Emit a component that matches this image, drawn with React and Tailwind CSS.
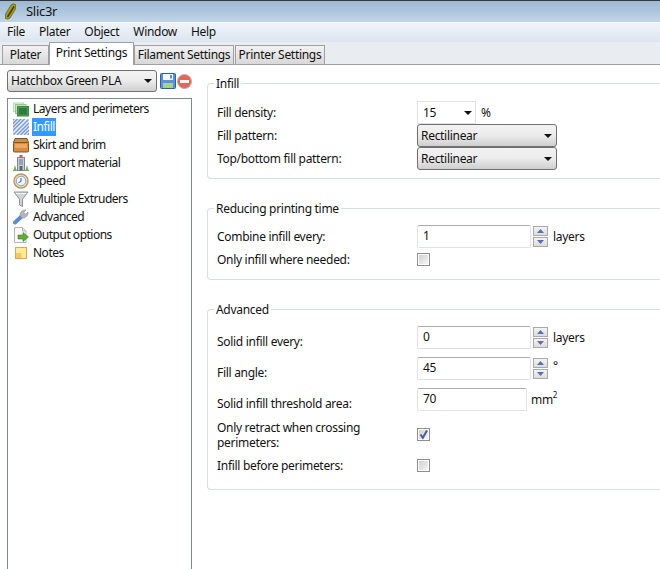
import React from "react";

const Caret = ({ className = "" }) => (
  <svg width="8" height="4" viewBox="0 0 8 4" className={className}><path d="M0 0H8L4 4Z" fill="#111" /></svg>
);

const Combo = ({ label, className = "" }) => (
  <div className={`flex items-center justify-between pl-[3px] pr-[4px] border border-[#707070] rounded-[3px] bg-gradient-to-b from-[#f3f3f3] via-[#ebebeb] to-[#cfcfcf] ${className}`}>
    <span>{label}</span>
    <Caret />
  </div>
);

const Spin = () => (
  <div className="flex flex-col gap-[1px] ml-[2px] w-[15px]">
    {[0, 1].map((i) => (
      <div key={i} className="h-[10px] border border-[#a9a9a9] bg-gradient-to-b from-[#f4f4f4] to-[#dcdcdc] flex items-center justify-center">
        <svg width="7" height="4" viewBox="0 0 7 4"><path d={i === 0 ? "M0 4H7L3.5 0Z" : "M0 0H7L3.5 4Z"} fill="#5a6fae" /></svg>
      </div>
    ))}
  </div>
);

const Input = ({ value, w = "w-[114px]" }) => (
  <div className={`${w} h-[23px] flex items-center pl-[5px] pb-[1px] border border-[#dfe3e8] border-t-[#abadb3] rounded-[2px] bg-white shrink-0`}>{value}</div>
);

const Check = ({ checked, className = "" }) => (
  <div className={`w-[13px] h-[13px] border border-[#8e8e8e] bg-white p-[1px] relative ${className}`}>
    <div className="w-full h-full bg-gradient-to-br from-[#d0d0d0] to-[#f6f6f6]" />
    {checked && (
      <svg width="11" height="11" viewBox="0 0 11 11" className="absolute left-0 top-0">
        <path d="M2.5 5.5L4.8 8.8L9 1.5" fill="none" stroke="#4a5fa5" strokeWidth="2" />
      </svg>
    )}
  </div>
);

const Group = ({ title, className, children }) => (
  <div className={`relative border border-r-0 border-[#d5dfe5] rounded-l-[4px] ${className}`}>
    <span className="absolute -top-[8px] left-[6px] px-[2px] bg-white leading-[16px]">{title}</span>
    {children}
  </div>
);

const Row = ({ label, className = "", children }) => (
  <div className={`flex items-center ${className}`}>
    <div className="w-[200px] shrink-0 leading-[15px]">{label}</div>
    {children}
  </div>
);

const icons = {
  layers: (
    <svg width="16" height="16" viewBox="0 0 16 16">
      <rect x="0.5" y="2" width="10" height="8.5" fill="#e6f3e2" stroke="#b5dbae" />
      <rect x="2.5" y="3.5" width="10.5" height="9" fill="#c5e4bd" stroke="#93c78a" />
      <rect x="4.5" y="5.5" width="11" height="9.5" fill="#4d9a52" stroke="#3f8a49" />
      <rect x="6" y="7" width="8" height="6.5" fill="#2f7c3c" />
    </svg>
  ),
  infill: (
    <svg width="16" height="16" viewBox="0 0 16 16">
      <rect width="16" height="16" fill="#e4ecf7" />
      <path d="M-2 3L3 -2M-2 6.5L6.5 -2M-2 10L10 -2M-2 13.5L13.5 -2M0.5 15.5L15.5 0.5M4 16L16 4M7.5 16L16 7.5M11 16L16 11M14.5 16L18 12.5" stroke="#7a9bcc" strokeWidth="1.4" />
    </svg>
  ),
  skirt: (
    <svg width="16" height="16" viewBox="0 0 16 16">
      <path d="M2 1.5H14L15.5 5.5H0.5Z" fill="#c98f52" stroke="#7f5526" />
      <rect x="0.5" y="5.5" width="15" height="9.5" rx="1" fill="#d98a42" stroke="#7f5526" />
      <rect x="2" y="7" width="12" height="4" fill="#eda863" />
    </svg>
  ),
  support: (
    <svg width="16" height="16" viewBox="0 0 16 16">
      <path d="M0 15H16V16H0Z" fill="#6fb35f" />
      <path d="M2 10L0.5 15H3.5ZM14 10L12.5 15H15.5Z" fill="#6fb35f" />
      <rect x="4.5" y="2.5" width="7" height="13" fill="#c7ced8" stroke="#7c8694" />
      <rect x="6.5" y="0" width="3" height="2.5" fill="#d9534a" />
      <path d="M6 5H10M6 7H10M6 9H10" stroke="#66768c" />
      <rect x="6.5" y="11" width="3" height="4.5" fill="#5c6670" />
    </svg>
  ),
  speed: (
    <svg width="16" height="16" viewBox="0 0 16 16">
      <circle cx="8" cy="8" r="7" fill="#efe0bd" stroke="#b89a62" strokeWidth="1.5" />
      <circle cx="8" cy="8" r="4.8" fill="#eef3fa" stroke="#8aa0c0" />
      <path d="M8 5V8.5L5.5 9.5" fill="none" stroke="#4a5f85" />
    </svg>
  ),
  funnel: (
    <svg width="16" height="16" viewBox="0 0 16 16">
      <path d="M1 1H15L9.5 8V15.5L6.5 14V8Z" fill="#cfd3d4" stroke="#8f9496" />
      <path d="M3 2.5H13" stroke="#f5f5f5" />
    </svg>
  ),
  wrench: (
    <svg width="16" height="16" viewBox="0 0 16 16">
      <path d="M2 13.5L8 8" stroke="#5b8cd0" strokeWidth="4" strokeLinecap="round" />
      <path d="M7 7C6.5 3.5 9.5 0.5 13 1L10.7 3.3L12.7 5.3L15 3C15.5 6.5 12.5 9.5 9 9Z" fill="#b4b8bc" stroke="#84888c" strokeWidth="0.6" />
    </svg>
  ),
  output: (
    <svg width="16" height="16" viewBox="0 0 16 16">
      <path d="M1.5 0.5H9.5L13 4V15.5H1.5Z" fill="#fafafa" stroke="#b5b5b5" />
      <path d="M9.5 0.5V4H13" fill="#e5e5e5" stroke="#b5b5b5" />
      <path d="M5 8H10V5.5L15.5 10L10 14.5V12H5Z" fill="#62ad3a" stroke="#3d7d20" strokeWidth="0.6" />
    </svg>
  ),
  notes: (
    <svg width="16" height="16" viewBox="0 0 16 16">
      <rect x="2.5" y="2.5" width="11" height="11" fill="#fdeb9c" stroke="#e8a24a" />
      <path d="M3 8H8.5V13H3Z" fill="#f7c860" />
    </svg>
  ),
};

const items = [
  ["layers", "Layers and perimeters"],
  ["infill", "Infill"],
  ["skirt", "Skirt and brim"],
  ["support", "Support material"],
  ["speed", "Speed"],
  ["funnel", "Multiple Extruders"],
  ["wrench", "Advanced"],
  ["output", "Output options"],
  ["notes", "Notes"],
];

export default function App() {
  return (
    <div className="w-[660px] h-[569px] overflow-hidden flex flex-col bg-white text-[12px] tracking-[-0.3px] text-[#111] font-['Noto_Sans',sans-serif]">
      {/* Title bar */}
      <div className="h-[22px] shrink-0 flex items-center gap-[10px] pl-[5px] border-t border-[#3a3a3a] bg-gradient-to-b from-[#9cb8d2] to-[#c0d4e6]">
        <svg width="11" height="17" viewBox="0 0 11 17">
          <path d="M0.5 11L6 2Q8 0 10.5 1.5V6L5 15Q3 17 0.5 15.5Z" fill="#a39b1e" stroke="#5f5a16" strokeWidth="0.7" />
          <path d="M2.5 14L9 3.5" stroke="#3f3c10" strokeWidth="1.5" />
        </svg>
        <span className="text-[13px]">Slic3r</span>
      </div>
      {/* Menu */}
      <div className="h-[20px] shrink-0 flex items-center pl-[7px] gap-[14px] bg-gradient-to-b from-[#f2f5fa] to-[#dbe5f0]">
        {["File", "Plater", "Object", "Window", "Help"].map((m) => <span key={m}>{m}</span>)}
      </div>
      {/* Tabs */}
      <div className="h-[23px] shrink-0 flex items-end pl-[2px] bg-[#e9edf2] border-b border-[#a0a0a0]">
        <div className="w-[47px] h-[19px] flex items-center justify-center border border-b-0 border-[#a0a0a0] bg-gradient-to-b from-[#f2f2f2] to-[#d8d8d8]">Plater</div>
        <div className="w-[85px] h-[23px] -mb-[1px] pb-[3px] flex items-center justify-center border border-b-0 border-[#a0a0a0] bg-white relative">Print Settings</div>
        <div className="w-[100px] h-[19px] flex items-center justify-center border border-b-0 border-[#a0a0a0] bg-gradient-to-b from-[#f2f2f2] to-[#d8d8d8]">Filament Settings</div>
        <div className="w-[90px] ml-[1px] h-[19px] flex items-center justify-center border border-b-0 border-[#a0a0a0] bg-gradient-to-b from-[#f2f2f2] to-[#d8d8d8]">Printer Settings</div>
      </div>
      {/* Body */}
      <div className="flex-1 flex min-h-0">
        {/* Left column */}
        <div className="w-[207px] shrink-0 pl-[7px] pt-[5px] flex flex-col">
          <div className="flex items-center h-[22px] w-[185px]">
            <Combo label="Hatchbox Green PLA" className="w-[150px] h-[22px]" />
            <svg width="16" height="16" viewBox="0 0 16 16" className="ml-[3px] shrink-0">
              <rect x="0.5" y="0.5" width="15" height="15" rx="1" fill="#5a92d8" stroke="#2d5fa5" />
              <rect x="3" y="1" width="10" height="6" fill="#f4f7fb" />
              <rect x="10" y="2" width="2" height="3.5" fill="#5a92d8" />
              <rect x="3" y="10" width="10" height="5" fill="#a8cf8f" />
            </svg>
            <svg width="15" height="15" viewBox="0 0 15 15" className="ml-[1px] shrink-0">
              <circle cx="7.5" cy="7.5" r="7" fill="#e8645a" stroke="#b9b0ac" />
              <rect x="3" y="6" width="9" height="3" fill="#fff" />
            </svg>
          </div>
          <div className="mt-[6px] w-[185px] flex-1 border border-b-0 border-[#828790] pt-[1px] pl-[4px] bg-white tracking-[-0.5px]">
            {items.map(([k, t]) => (
              <div key={k} className="h-[18px] flex items-center">
                <span className="w-[16px] h-[16px] shrink-0 ml-[1px]">{icons[k]}</span>
                <span className={`ml-[3px] h-[18px] flex items-center pl-[1px] pr-[1px] ${k === "infill" ? "bg-[#3399ff] text-white" : ""}`}>{t}</span>
              </div>
            ))}
          </div>
        </div>
        {/* Right column */}
        <div className="flex-1 flex flex-col pt-[18px] pl-0">
          <Group title="Infill" className="h-[96px] pl-[9px] pt-[17px] shrink-0">
            <Row label="Fill density:" className="h-[23px]">
              <div className="w-[59px] h-[23px] flex items-center justify-between pl-[5px] pr-[3px] border border-[#dfe3e8] bg-white">
                <span>15</span><Caret />
              </div>
              <span className="ml-[5px]">%</span>
            </Row>
            <Row label="Fill pattern:" className="h-[23px]">
              <Combo label="Rectilinear" className="w-[140px] h-[23px]" />
            </Row>
            <Row label="Top/bottom fill pattern:" className="h-[23px]">
              <Combo label="Rectilinear" className="w-[140px] h-[23px]" />
            </Row>
          </Group>
          <Group title="Reducing printing time" className="mt-[29px] h-[72px] pl-[9px] pt-[16px] shrink-0">
            <Row label="Combine infill every:" className="h-[23px]">
              <Input value="1" /><Spin /><span className="ml-[5px]">layers</span>
            </Row>
            <Row label="Only infill where needed:" className="h-[13px] mt-[5px]">
              <Check />
            </Row>
          </Group>
          <Group title="Advanced" className="mt-[29px] h-[181px] pl-[9px] pt-[16px] shrink-0">
            <Row label={<span className="relative top-[4px]">Solid infill every:</span>} className="h-[23px]">
              <Input value="0" /><Spin /><span className="ml-[5px]">layers</span>
            </Row>
            <Row label={<span className="relative top-[4px]">Fill angle:</span>} className="h-[23px] mt-[8px]">
              <Input value="45" /><Spin /><span className="ml-[5px] -mt-[6px]">°</span>
            </Row>
            <Row label={<span className="relative top-[4px]">Solid infill threshold area:</span>} className="h-[23px] mt-[8px]">
              <Input value="70" w="w-[110px]" />
              <span className="ml-[4px] flex items-start leading-[15px]">mm<span className="text-[8px] leading-[8px] -mt-[1px]">2</span></span>
            </Row>
            <Row label={<>Only retract when crossing<br />perimeters:</>} className="h-[30px] mt-[9px]">
              <Check checked className="-mt-[2px]" />
            </Row>
            <Row label="Infill before perimeters:" className="h-[13px] mt-[9px]">
              <Check />
            </Row>
          </Group>
        </div>
      </div>
    </div>
  );
}
